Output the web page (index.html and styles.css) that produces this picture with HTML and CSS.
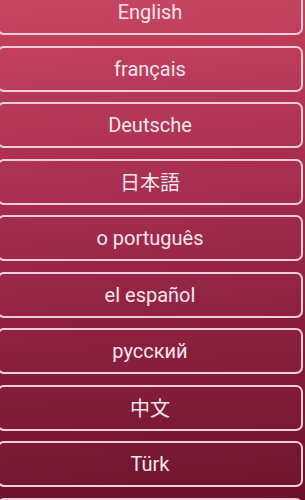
FILE: index.html
```html
<!DOCTYPE html>
<html lang="en">
<head>
    <meta charset="UTF-8">
    <meta name="viewport" content="width=device-width, initial-scale=1.0">
    <title>Language</title>
    <link rel="stylesheet" href="styles.css">
</head>
<body>
    <ul class="lang-list">
        <li class="lang-item">English</li>
        <li class="lang-item">français</li>
        <li class="lang-item">Deutsche</li>
        <li class="lang-item">日本語</li>
        <li class="lang-item">o português</li>
        <li class="lang-item">el español</li>
        <li class="lang-item">русский</li>
        <li class="lang-item">中文</li>
        <li class="lang-item">Türk</li>
        <li class="lang-item"></li>
    </ul>
</body>
</html>
```
FILE: styles.css
```css
html, body {
    margin: 0;
    padding: 0;
    height: 100%;
    overflow: hidden;
}
body {
    font-family: Roboto, "Noto Sans CJK JP", sans-serif;
    background: linear-gradient(175deg, #c7435f 0%, #a92c4f 35%, #8b1d3c 65%, #6a1028 100%);
}
.lang-list {
    list-style-type: none;
    margin: -11px 2px 0 -3px;
    padding: 0;
    display: flex;
    flex-direction: column;
    gap: 10.5px;
}
.lang-item {
    height: 42px;
    display: flex;
    align-items: center;
    justify-content: center;
    border: 2px solid #f3cdd9;
    border-radius: 7px;
    color: #f8e6ec;
    font-size: 20px;
    background-color: rgba(255,255,255,0.02);
}
```
